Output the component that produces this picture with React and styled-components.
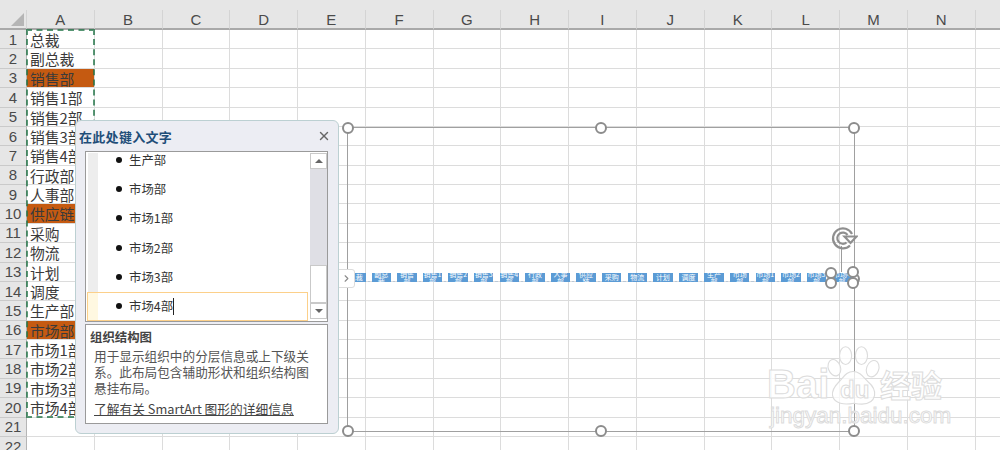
import React from "react";
import styled, { createGlobalStyle } from "styled-components";
import { X, ChevronRight } from "lucide-react";

const CJK = `"Noto Sans CJK SC", "Liberation Sans", sans-serif`;

const rows = [
  { text: "总裁" },
  { text: "副总裁" },
  { text: "销售部", hi: true },
  { text: "销售1部" },
  { text: "销售2部" },
  { text: "销售3部" },
  { text: "销售4部" },
  { text: "行政部" },
  { text: "人事部" },
  { text: "供应链", hi: true },
  { text: "采购" },
  { text: "物流" },
  { text: "计划" },
  { text: "调度" },
  { text: "生产部" },
  { text: "市场部", hi: true },
  { text: "市场1部" },
  { text: "市场2部" },
  { text: "市场3部" },
  { text: "市场4部" },
  { text: "" },
  { text: "" },
];

const columns = "BCDEFGHIJKLMN".split("");
const listItems = ["生产部", "市场部", "市场1部", "市场2部", "市场3部", "市场4部"];
const frameHandles = [
  ["0", "0"],
  ["50%", "0"],
  ["100%", "0"],
  ["0", "100%"],
  ["50%", "100%"],
  ["100%", "100%"],
  ["100%", "50%"],
];
const shapeHandles = [
  [831, 273],
  [853, 272],
  [831, 283],
  [853, 283],
];

const App = () => (
  <Page>
    <GlobalStyle />
    <TopBar />
    <Sheet>
      <Corner>
        <CornerMark />
      </Corner>
      <ColHead>A</ColHead>
      {columns.map((c) => (
        <ColHead key={c}>{c}</ColHead>
      ))}
      <ColHead />
      {rows.map((row, i) => (
        <React.Fragment key={i}>
          <RowHead>{i + 1}</RowHead>
          <Cell $hi={row.hi}>{row.text}</Cell>
          {columns.map((c) => (
            <Cell key={c} />
          ))}
          <Cell />
        </React.Fragment>
      ))}
    </Sheet>

    <MarchingAnts />

    <Frame>
      {frameHandles.map(([x, y]) => (
        <FrameHandle key={x + y} $x={x} $y={y} />
      ))}
    </Frame>

    <ChipRow>
      {rows.slice(0, 20).map((row) => (
        <Chip key={row.text}>
          <ChipText>{row.text}</ChipText>
        </Chip>
      ))}
    </ChipRow>

    <RotateStem />
    <RotateIcon viewBox="0 0 28 26" fill="none" stroke="#8f8f8f" strokeWidth="2.2">
      <path d="M20 20.5A10 10 0 1 1 22 9" />
      <path d="M16.5 17.5A5.6 5.6 0 1 1 17.5 10" />
      <path d="M14.5 11.5h12l-6 6.5z" fill="#fff" />
    </RotateIcon>
    {shapeHandles.map(([x, y]) => (
      <ShapeHandle key={`${x}-${y}`} style={{ left: x - 6, top: y - 6 }} />
    ))}

    <ExpandTab>
      <ChevronRight size={11} strokeWidth={2.4} color="#8a8a8a" />
    </ExpandTab>

    <Pane>
      <PaneHeader>
        <PaneTitle>在此处键入文字</PaneTitle>
        <X size={14} strokeWidth={2.4} color="#666" />
      </PaneHeader>
      <Outline>
        <List>
          {listItems.map((item, i) => (
            <ListRow key={item} $active={i === listItems.length - 1}>
              <Strip $active={i === listItems.length - 1} />
              <Bullet />
              <span>{item}</span>
              {i === listItems.length - 1 && <Caret />}
            </ListRow>
          ))}
        </List>
        <Scrollbar>
          <ScrollBtn>
            <Arrow />
          </ScrollBtn>
          <Track>
            <Thumb />
          </Track>
          <ScrollBtn>
            <Arrow $down />
          </ScrollBtn>
        </Scrollbar>
      </Outline>
      <Info>
        <InfoTitle>组织结构图</InfoTitle>
        <InfoText>
          用于显示组织中的分层信息或上下级关系。此布局包含辅助形状和组织结构图悬挂布局。
        </InfoText>
        <InfoLink>了解有关 SmartArt 图形的详细信息</InfoLink>
      </Info>
    </Pane>

    <Watermark>
      <Paw viewBox="0 0 60 70">
        <ellipse cx="9" cy="24" rx="6.5" ry="9" transform="rotate(-20 9 24)" />
        <ellipse cx="21" cy="11" rx="6.5" ry="9.5" />
        <ellipse cx="38" cy="11" rx="6.5" ry="9.5" />
        <ellipse cx="50" cy="25" rx="6.5" ry="9" transform="rotate(20 50 25)" />
        <path d="M29 28c7 0 11 6 16 11 6 5 8 9 7 15-2 9-12 10-22 8-10 2-21 1-23-8-1-6 2-10 7-15 5-5 8-11 15-11z" />
      </Paw>
      <MarkBai>Bai</MarkBai>
      <MarkDu>du</MarkDu>
      <MarkCn>经验</MarkCn>
      <MarkUrl>jingyan.baidu.com</MarkUrl>
    </Watermark>
  </Page>
);

export default App;

const GlobalStyle = createGlobalStyle`
  html, body {
    margin: 0;
    padding: 0;
    background: #fff;
    overflow: hidden;
  }
`;

const Page = styled.div`
  position: relative;
  width: 1000px;
  height: 450px;
  overflow: hidden;
  font-family: ${CJK};
  background: #fff;
`;

const TopBar = styled.div`
  height: 10px;
  background: #e6e6e6;
`;

const Sheet = styled.div`
  display: grid;
  grid-template-columns: 27px repeat(15, 67.75px);
  grid-template-rows: 20px repeat(22, 19.38px);
`;

const Corner = styled.div`
  position: relative;
  background: #e6e6e6;
  border-right: 1px solid #d4d4d4;
  border-bottom: 2px solid #a9a9a9;
  box-sizing: border-box;
`;

const CornerMark = styled.div`
  position: absolute;
  right: 2px;
  bottom: 2px;
  width: 0;
  height: 0;
  border-style: solid;
  border-width: 0 0 13px 13px;
  border-color: transparent transparent #b5b5b5 transparent;
`;

const ColHead = styled.div`
  display: flex;
  align-items: center;
  justify-content: center;
  box-sizing: border-box;
  background: #e6e6e6;
  border-right: 1px solid #d4d4d4;
  border-bottom: 2px solid #a9a9a9;
  font-family: "Liberation Sans", sans-serif;
  font-size: 15px;
  color: #4a4a4a;
`;

const RowHead = styled.div`
  display: flex;
  align-items: center;
  justify-content: center;
  box-sizing: border-box;
  background: #e6e6e6;
  border-right: 1px solid #b5b5b5;
  border-bottom: 1px solid #cacaca;
  font-family: "Liberation Sans", sans-serif;
  font-size: 15px;
  color: #4a4a4a;
`;

const Cell = styled.div`
  box-sizing: border-box;
  padding-left: 3px;
  border-right: 1px solid #dcdcdc;
  border-bottom: 1px solid #dcdcdc;
  background: ${(p) => (p.$hi ? "#c55a11" : "transparent")};
  font-size: 14.8px;
  line-height: 19px;
  color: #3a3a3a;
  white-space: nowrap;
  overflow: hidden;
`;

const MarchingAnts = styled.div`
  position: absolute;
  left: 26px;
  top: 29px;
  width: 69px;
  height: 389px;
  box-sizing: border-box;
  border: 2px dashed #217346;
  opacity: 0.75;
`;

const Frame = styled.div`
  position: absolute;
  left: 347px;
  top: 127px;
  width: 508px;
  height: 305px;
  box-sizing: border-box;
  border: 1px solid #a0a0a0;
`;

const FrameHandle = styled.div`
  position: absolute;
  left: ${(p) => p.$x};
  top: ${(p) => p.$y};
  width: 12px;
  height: 12px;
  margin: -6.5px 0 0 -6.5px;
  box-sizing: border-box;
  border: 2px solid #8c8c8c;
  border-radius: 50%;
  background: #fff;
`;

const ShapeHandle = styled.div`
  position: absolute;
  width: 12px;
  height: 12px;
  box-sizing: border-box;
  border: 2px solid #8c8c8c;
  border-radius: 50%;
  background: #fff;
`;

const ChipRow = styled.div`
  position: absolute;
  left: 346px;
  top: 273px;
  display: flex;
  gap: 6.1px;
`;

const Chip = styled.div`
  position: relative;
  width: 19.5px;
  height: 9px;
  background: #5b9bd5;

  &::after {
    content: "";
    position: absolute;
    left: 100%;
    bottom: 0;
    width: 6.1px;
    height: 1px;
    background: linear-gradient(to right, transparent 30%, #b9c7d6 30%, #b9c7d6 70%, transparent 70%);
  }
`;

const ChipText = styled.div`
  height: 9px;
  overflow: hidden;
  display: flex;
  align-items: center;
  justify-content: center;
  color: #fff;
  font-size: 7px;
  line-height: 7px;
  text-align: center;
`;

const RotateStem = styled.div`
  position: absolute;
  left: 841px;
  top: 246px;
  width: 1px;
  height: 26px;
  background: #9c9c9c;
`;

const RotateIcon = styled.svg`
  position: absolute;
  left: 830px;
  top: 225px;
  width: 28px;
  height: 26px;
`;

const ExpandTab = styled.div`
  position: absolute;
  left: 337px;
  top: 269px;
  width: 18px;
  height: 19px;
  display: flex;
  align-items: center;
  justify-content: center;
  box-sizing: border-box;
  background: #fff;
  border: 1px solid #dcdcdc;
  border-radius: 0 3px 3px 0;
`;

const Pane = styled.div`
  position: absolute;
  left: 75px;
  top: 120px;
  width: 264px;
  height: 314px;
  box-sizing: border-box;
  padding: 0 10px 9px 9px;
  display: flex;
  flex-direction: column;
  background: #ecedf3;
  border: 1px solid #bcd0d2;
  border-radius: 6px;
`;

const PaneHeader = styled.div`
  height: 30px;
  flex: none;
  display: flex;
  align-items: center;
  justify-content: space-between;
  margin: 0 -3px 0 -6px;
`;

const PaneTitle = styled.div`
  font-size: 13px;
  font-weight: 700;
  letter-spacing: 0.3px;
  color: #1f4e79;
`;

const Outline = styled.div`
  height: 171px;
  flex: none;
  box-sizing: border-box;
  display: flex;
  background: #fff;
  border: 1px solid #9a9a9a;
  padding: 1px 0 0 1px;
`;

const List = styled.div`
  flex: 1;
  display: flex;
  flex-direction: column;
  justify-content: flex-end;
  overflow: hidden;
`;

const ListRow = styled.div`
  position: relative;
  height: 29.3px;
  flex: none;
  box-sizing: border-box;
  display: flex;
  align-items: center;
  gap: 7px;
  padding-left: 28px;
  font-size: 12.4px;
  color: #333;
  border: 1px solid ${(p) => (p.$active ? "#fcd08a" : "transparent")};
`;

const Strip = styled.div`
  position: absolute;
  left: 0;
  top: ${(p) => (p.$active ? "0" : "-1px")};
  bottom: ${(p) => (p.$active ? "0" : "-1px")};
  width: 10px;
  background: ${(p) => (p.$active ? "#fff8e1" : "#ededed")};
`;

const Bullet = styled.div`
  width: 6px;
  height: 6px;
  border-radius: 50%;
  background: #111;
  flex: none;
`;

const Caret = styled.div`
  width: 1px;
  height: 17px;
  margin-left: -7px;
  background: #222;
`;

const Scrollbar = styled.div`
  width: 17px;
  margin: 0 0 2px 2px;
  flex: none;
  display: flex;
  flex-direction: column;
  background: #dfdfe5;
`;

const ScrollBtn = styled.div`
  height: 16px;
  flex: none;
  box-sizing: border-box;
  display: flex;
  align-items: center;
  justify-content: center;
  background: #fff;
  border: 1px solid #c9c9c9;
`;

const Arrow = styled.div`
  width: 0;
  height: 0;
  border-left: 4px solid transparent;
  border-right: 4px solid transparent;
  ${(p) =>
    p.$down
      ? "border-top: 4px solid #666;"
      : "border-bottom: 4px solid #666;"}
`;

const Track = styled.div`
  flex: 1;
  display: flex;
  flex-direction: column;
  justify-content: flex-end;
`;

const Thumb = styled.div`
  height: 38px;
  box-sizing: border-box;
  background: #fff;
  border: 1px solid #c9c9c9;
`;

const Info = styled.div`
  margin-top: 2px;
  height: 101px;
  box-sizing: border-box;
  padding: 4px 6px 0 4px;
  background: #fff;
  border: 1px solid #9a9a9a;
  color: #555;
`;

const InfoTitle = styled.div`
  font-size: 12.4px;
  font-weight: 700;
  line-height: 16px;
  color: #444;
`;

const InfoText = styled.div`
  margin: 3px 0 0 4px;
  font-size: 12.65px;
  line-height: 16px;
`;

const InfoLink = styled.div`
  margin: 5px 0 0 4px;
  font-size: 12.75px;
  line-height: 16px;
  color: #444;
  text-decoration: underline;
  white-space: nowrap;
`;

const Watermark = styled.div`
  position: absolute;
  left: 760px;
  top: 340px;
  width: 200px;
  height: 90px;
  pointer-events: none;
`;

const Paw = styled.svg`
  position: absolute;
  left: 66px;
  top: 5px;
  width: 56px;
  height: 66px;
  fill: rgba(255, 255, 255, 0.75);
  stroke: #dcdcdc;
  stroke-width: 1.2;
`;

const Outlined = styled.div`
  position: absolute;
  color: rgba(255, 255, 255, 0.85);
  -webkit-text-stroke: 1px #dcdcdc;
  font-family: "Liberation Sans", sans-serif;
  font-weight: 700;
  white-space: nowrap;
`;

const MarkBai = styled(Outlined)`
  left: 7px;
  top: 22px;
  font-size: 40px;
  line-height: 44px;
`;

const MarkDu = styled(Outlined)`
  left: 80px;
  top: 36px;
  font-size: 24px;
  line-height: 28px;
`;

const MarkCn = styled(Outlined)`
  left: 120px;
  top: 24px;
  font-family: ${CJK};
  font-size: 31px;
  line-height: 40px;
`;

const MarkUrl = styled(Outlined)`
  left: 10px;
  top: 62px;
  font-size: 22.5px;
  line-height: 28px;
  font-weight: 400;
`;
